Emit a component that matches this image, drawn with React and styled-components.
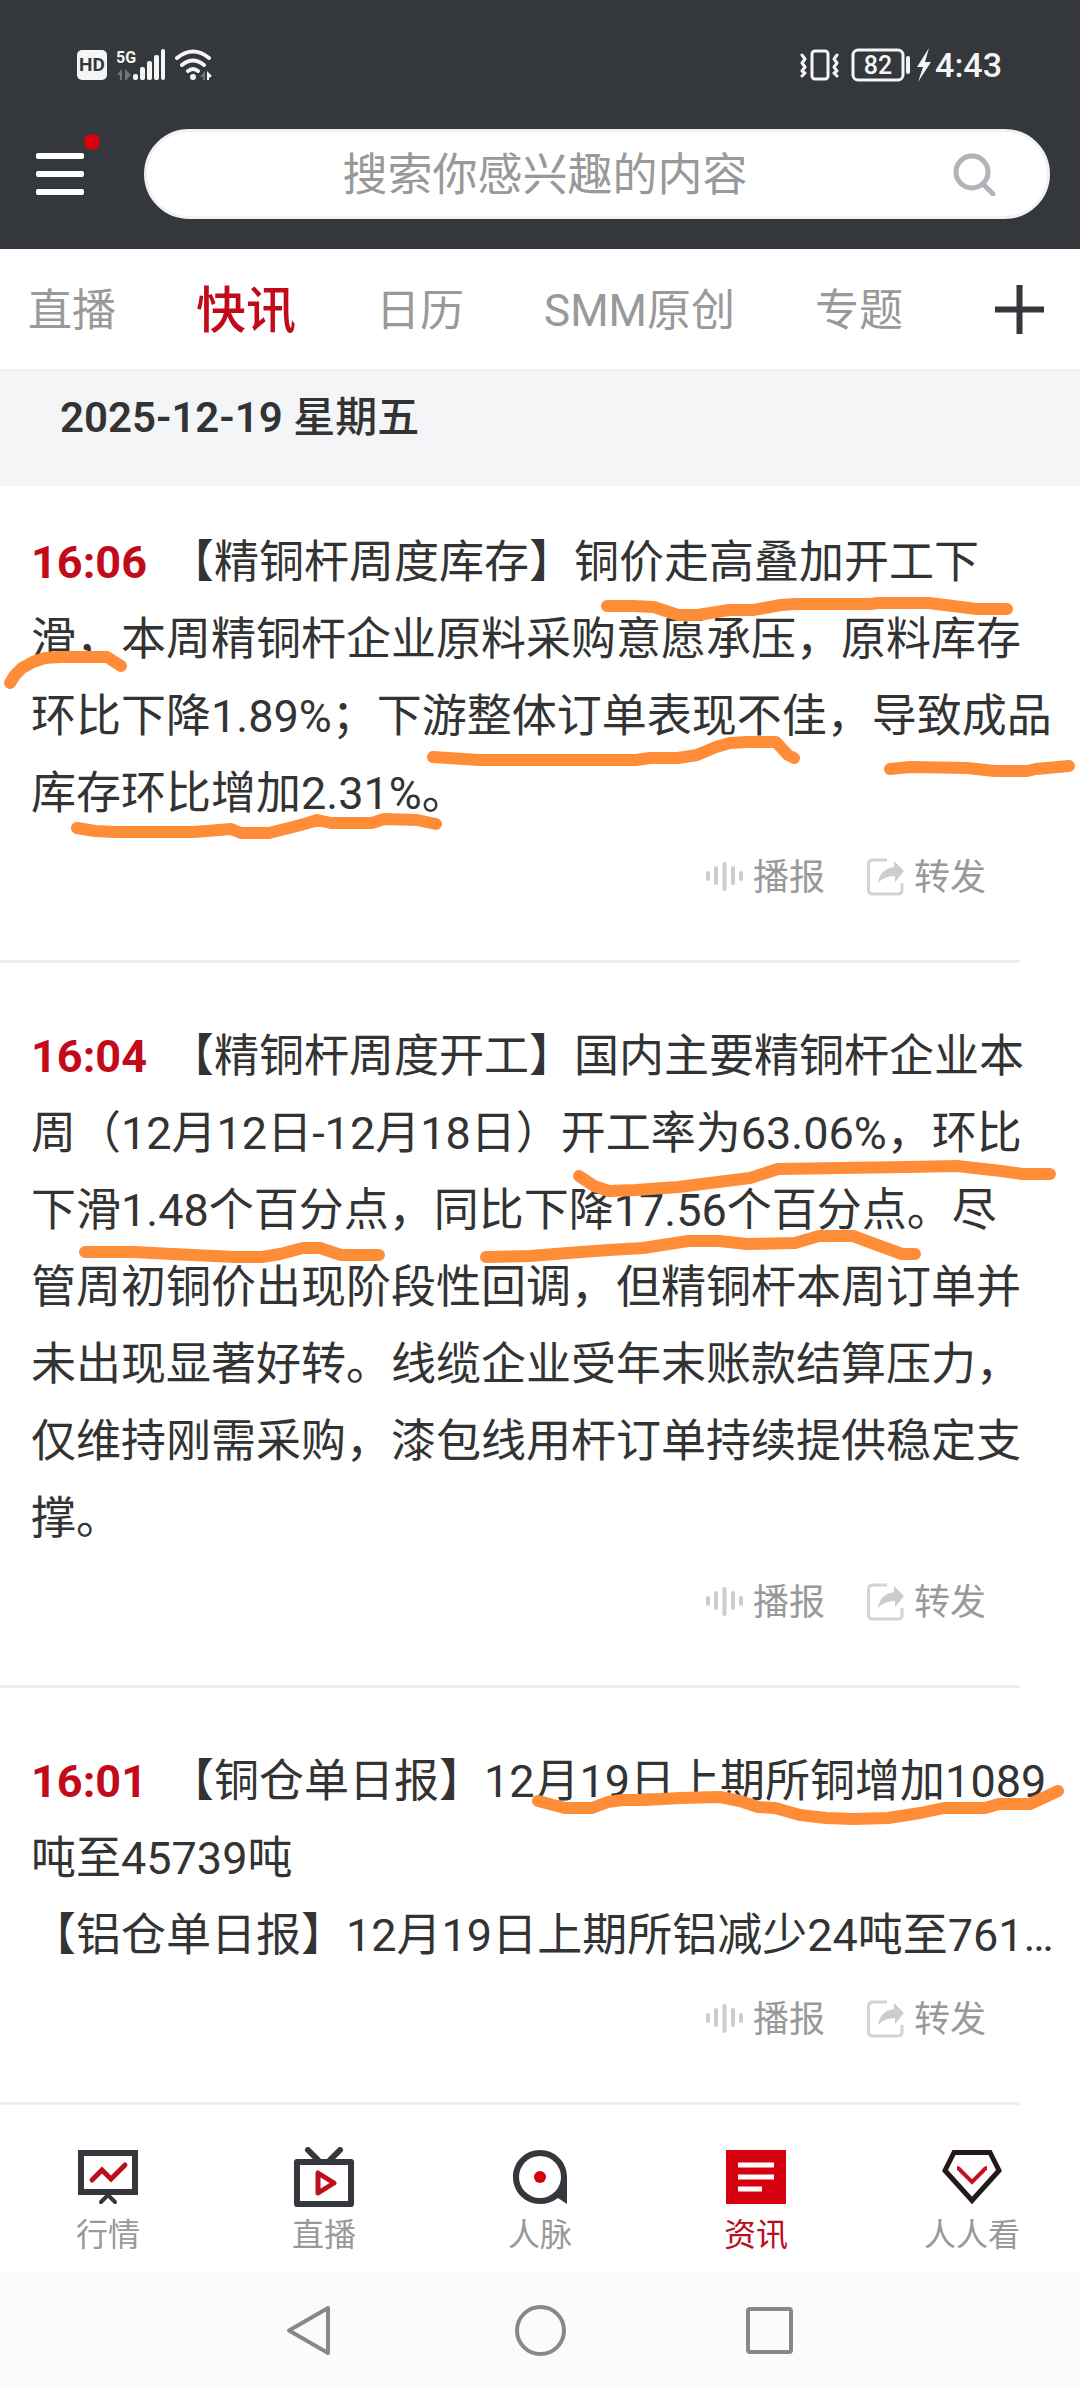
import React from "react";
import styled, { createGlobalStyle } from "styled-components";

const GlobalStyle = createGlobalStyle`
  * {
    box-sizing: border-box;
  }

  body {
    margin: 0;
    background: #fff;
    color: #333;
    font-family: Roboto, "Noto Sans CJK SC", sans-serif;
    text-spacing-trim: space-all;
  }

  svg {
    display: block;
    flex: none;
  }

  button {
    padding: 0;
    border: 0;
    background: none;
    color: inherit;
    font: inherit;
  }

  a {
    color: inherit;
    text-decoration: none;
  }
`;

const Header = styled.header`
  height: 249px;
  background: #34373c;
`;

const StatusBar = styled.div`
  height: 129px;
  padding: 0 78px 0 77px;
  display: flex;
  align-items: center;
  justify-content: space-between;
  color: #f5f5f5;
`;

const StatusGroup = styled.div`
  display: flex;
  align-items: center;
  gap: ${props => props.$gap}px;
`;

const HdBadge = styled.span`
  width: 30px;
  height: 30px;
  border-radius: 5px;
  background: #f5f5f5;
  color: #34373c;
  font-size: 19px;
  font-weight: 700;
  line-height: 30px;
  text-align: center;
`;

const Clock = styled.span`
  font-size: 34px;
  font-weight: 500;
  line-height: 40px;
`;

const SearchRow = styled.div`
  padding: 0 30px 0 36px;
  display: flex;
  align-items: center;
  gap: 60px;
`;

const MenuButton = styled.button`
  position: relative;
`;

const Dot = styled.span`
  position: absolute;
  top: -19px;
  right: -16px;
  width: 16px;
  height: 16px;
  border-radius: 50%;
  background: #d7000f;
`;

const SearchBox = styled.form`
  flex: 1;
  height: 90px;
  padding-right: 51px;
  display: flex;
  align-items: center;
  gap: 10px;
  border: 3px solid #f1f1f3;
  border-radius: 45px;
  background: #fff;
`;

const SearchInput = styled.input`
  flex: 1;
  min-width: 0;
  height: 100%;
  padding: 3px 0 0;
  border: 0;
  outline: 0;
  background: none;
  font-family: inherit;
  font-size: 45px;
  text-align: center;

  &::placeholder {
    color: #999;
    opacity: 1;
  }
`;

const Tabs = styled.nav`
  height: 123px;
  padding: 0 36px 0 28px;
  display: flex;
  align-items: center;
  gap: 80px;
  border-bottom: 3px solid #f1f1f1;
`;

const Tab = styled.a`
  padding-top: 4px;
  color: ${props => props.$active ? "#c10a1a" : "#999"};
  font-size: ${props => props.$active ? 50 : 44}px;
  font-weight: ${props => props.$active ? 500 : 400};
  line-height: 60px;
  white-space: nowrap;
`;

const AddButton = styled.button`
  margin-left: auto;
`;

const DateBar = styled.h2`
  height: 114px;
  margin: 0;
  padding: 16px 60px;
  background: #f4f5f7;
  font-size: 42px;
  font-weight: 600;
  line-height: 60px;
`;

const Weekday = styled.span`
  font-weight: 500;
`;

const Item = styled.article`
  position: relative;
  padding-top: ${props => props.$first ? 38 : 55}px;
`;

const ItemText = styled.p`
  margin: 0;
  padding: 0 20px 0 31px;
  font-size: 45px;
  line-height: 77px;
  white-space: pre-line;
`;

const Time = styled.time`
  margin-right: 22px;
  color: #c10a1a;
  font-weight: 700;
`;

const Actions = styled.div`
  height: 128px;
  padding: 20px 94px 0 0;
  display: flex;
  justify-content: flex-end;
  gap: 42px;
`;

const Action = styled.button`
  height: 52px;
  display: flex;
  align-items: center;
  gap: 10px;
  color: #999;
  font-size: 36px;
  line-height: 52px;
`;

const Divider = styled.hr`
  height: 3px;
  margin: 0 60px 0 0;
  border: 0;
  background: #eeeff1;
`;

const Marks = styled.svg`
  position: absolute;
  top: 0;
  left: 0;
  overflow: visible;
  pointer-events: none;
`;

const BottomNav = styled.nav`
  height: 167px;
  padding-top: 42px;
  display: grid;
  grid-template-columns: repeat(5, 1fr);
`;

const NavItem = styled.a`
  display: flex;
  flex-direction: column;
  align-items: center;
  gap: 4px;
  color: ${props => props.$active ? "#b80f1c" : "#999"};
  font-size: 32px;
  line-height: 48px;
`;

const SystemBar = styled.div`
  height: 116px;
  display: flex;
  align-items: center;
  justify-content: center;
  gap: 180px;
  background: #fbfbfb;
`;

const SignalIcon = () => (
  <svg width="48" height="32" viewBox="0 0 48 32" fill="#f5f5f5">
    <text x="-1" y="14" fontSize="16" fontWeight="700">5G</text>
    <path d="M0 26l5-6v11H3v-5zM8 20l6 6-4 4v1H8z" fill="#737578" />
    <rect x="16" y="25" width="5" height="6" rx="2" />
    <rect x="23" y="18" width="5" height="13" rx="2" />
    <rect x="30" y="12" width="5" height="19" rx="2" />
    <rect x="37" y="6" width="5" height="25" rx="2" />
    <rect x="44" y="0" width="4" height="31" rx="2" />
  </svg>
);

const WifiIcon = () => (
  <svg width="38" height="32" viewBox="0 0 38 32" fill="none" stroke="#f5f5f5" strokeWidth="4" strokeLinecap="round">
    <path d="M2 9q16-13 32 0M7 16q11-9 22 0M13 22q5-4 10 0" />
    <circle cx="18" cy="28" r="3" fill="#f5f5f5" stroke="none" />
    <path d="M25 28l5-6v9h-2v-3z" fill="#737578" stroke="none" />
    <path d="M32 22l5 5-3 2v2h-2z" fill="#f5f5f5" stroke="none" />
  </svg>
);

const VibrateIcon = () => (
  <svg width="39" height="32" viewBox="0 0 39 32" fill="none" stroke="#f5f5f5" strokeWidth="3" strokeLinecap="round" strokeLinejoin="round">
    <rect x="12" y="2" width="16" height="28" rx="3" />
    <path d="M2 6l3 4-3 4 3 4-3 4 3 2-3 3M37 6l-3 4 3 4-3 4 3 4-3 2 3 3" />
  </svg>
);

const BatteryIcon = () => (
  <svg width="80" height="34" viewBox="0 0 80 34" fill="none" stroke="#f5f5f5" strokeWidth="3">
    <rect x="2" y="2" width="50" height="30" rx="5" />
    <text x="27" y="26" fontSize="25" fontWeight="500" textAnchor="middle" fill="#f5f5f5" stroke="none">82</text>
    <path d="M57 10v14" strokeWidth="4" strokeLinecap="round" />
    <path d="M78 0L66 19h6l-5 15 13-20h-6z" fill="#f5f5f5" stroke="none" />
  </svg>
);

const MenuIcon = () => (
  <svg width="48" height="42" viewBox="0 0 48 42" fill="#fff">
    <rect width="48" height="6" rx="2" />
    <rect y="18" width="48" height="6" rx="2" />
    <rect y="36" width="48" height="6" rx="2" />
  </svg>
);

const SearchIcon = () => (
  <svg width="43" height="43" viewBox="0 0 43 43" fill="none" stroke="#b0b3b8" strokeWidth="5" strokeLinecap="round">
    <circle cx="19" cy="19" r="16" />
    <path d="M30 31l10 10" />
  </svg>
);

const PlusIcon = () => (
  <svg width="49" height="49" viewBox="0 0 49 49" stroke="#34373c" strokeWidth="6">
    <path d="M0 24.500h49M24.500 0v49" />
  </svg>
);

const WaveIcon = () => (
  <svg width="37" height="36" viewBox="0 0 37 36" stroke="#ccc" strokeWidth="4" strokeLinecap="round">
    <path d="M2 13v6M10 8v15M18.500 4v25M27 8v15M35 13v6" />
  </svg>
);

const ShareIcon = () => (
  <svg width="37" height="40" viewBox="0 0 37 40" fill="none">
    <path d="M20 2H6Q1.500 2 1.500 6v26q0 4 4.500 4h25q4 0 4-4v-7" stroke="#d4d4d4" strokeWidth="3" />
    <path d="M27 3l10 10-9 11v-6q-11 0-17 7 2-14 16-16z" fill="#ccc" />
  </svg>
);

const MarketIcon = () => (
  <svg width="60" height="60" viewBox="0 0 60 60" fill="none" stroke="#34373c" strokeWidth="6">
    <rect x="3" y="6" width="54" height="39" />
    <path d="M23 55l7-7 7 7" strokeWidth="4" strokeLinecap="round" />
    <path d="M14 33l10-10 9 9 14-14" stroke="#bd0f1c" strokeWidth="5" strokeLinecap="round" />
  </svg>
);

const LiveIcon = () => (
  <svg width="60" height="60" viewBox="0 0 60 60" fill="none" stroke="#34373c" strokeWidth="6" strokeLinejoin="round">
    <rect x="3" y="15" width="54" height="42" />
    <path d="M14 3l10 10M46 3L36 13" strokeLinecap="round" />
    <path d="M24 26v20l16-10z" stroke="#bd0f1c" strokeWidth="5" />
  </svg>
);

const PeopleIcon = () => (
  <svg width="60" height="60" viewBox="0 0 60 60" fill="none">
    <path d="M48 51Q40 57 30 57C15 57 3 45 3 30S15 3 30 3s27 12 27 27v27z" fill="#34373c" />
    <circle cx="30" cy="30" r="21" fill="#fff" />
    <circle cx="30" cy="30" r="6" fill="#d7000f" />
  </svg>
);

const NewsIcon = () => (
  <svg width="60" height="60" viewBox="0 0 60 60">
    <rect y="3" width="60" height="54" fill="#d7000f" />
    <path d="M12 18h36M12 30h36M12 42h24" stroke="#fff" strokeWidth="5" />
  </svg>
);

const DiamondIcon = () => (
  <svg width="60" height="60" viewBox="0 0 60 60" fill="none" stroke="#231a18" strokeWidth="5">
    <path d="M12 5.500h36l9 18-27 30-27-30z" />
    <path d="M15 21q2 0 4 3l11 11 11-11q2-3 4-3" stroke="#c7101e" strokeWidth="4" />
  </svg>
);

const tabs = ["直播", "快讯", "日历", "SMM原创", "专题"];

const navItems = [
  { label: "行情", icon: <MarketIcon /> },
  { label: "直播", icon: <LiveIcon /> },
  { label: "人脉", icon: <PeopleIcon /> },
  { label: "资讯", icon: <NewsIcon />, active: true },
  { label: "人人看", icon: <DiamondIcon /> }
];

// marks are marker strokes, in pixels from the top left of the item
const news = [
  {
    time: "16:06",
    text: "【精铜杆周度库存】铜价走高叠加开工下滑，本周精铜杆企业原料采购意愿承压，原料库存环比下降1.89%；下游整体订单表现不佳，导致成品库存环比增加2.31%。",
    marks: [
      "607,120 633,120 654,121 678,129 698,129 729,124 753,124 781,119 795,118 871,118 877,117 929,117 953,120 977,123 1007,123",
      "10,197 15,189 22,182 33,176 45,172 60,171 107,171 121,180",
      "433,271 448,272 479,274 636,274 650,272 678,272 697,269 716,261 730,257 747,256 776,256 788,269 794,272",
      "890,283 910,281 967,282 995,285 1027,285 1036,283 1069,280",
      "77,342 95,345 114,346 193,346 207,345 231,343 241,347 269,347 293,341 308,337 317,334 331,337 372,337 384,333 417,334 436,338"
    ]
  },
  {
    time: "16:04",
    text: "【精铜杆周度开工】国内主要精铜杆企业本周（12月12日-12月18日）开工率为63.06%，环比下滑1.48个百分点，同比下降17.56个百分点。尽\n管周初铜价出现阶段性回调，但精铜杆本周订单并未出现显著好转。线缆企业受年末账款结算压力，仅维持刚需采购，漆包线用杆订单持续提供稳定支撑。",
    marks: [
      "579,213 594,223 609,228 636,227 678,224 750,215 778,206 840,205 908,204 957,203 1001,208 1022,211 1050,211",
      "85,289 134,289 172,291 235,294 262,294 280,291 303,285 320,285 341,292 379,292",
      "486,294 530,293 568,290 609,287 643,285 688,278 719,278 747,281 795,280 819,273 853,273 880,283 902,291 915,291"
    ]
  },
  {
    time: "16:01",
    text: "【铜仓单日报】12月19日上期所铜增加1089吨至45739吨\n【铝仓单日报】12月19日上期所铝减少24吨至761…",
    marks: [
      "538,113 565,120 592,120 608,114 623,112 645,112 680,110 720,109 740,113 758,119 775,120 800,127 826,130 854,131 888,130 920,125 944,120 985,120 999,116 1030,116 1058,103"
    ]
  }
];

const NewsItem = ({ time, text, marks, first }) => (
  <Item $first={first}>
    <ItemText>
      <Time>{time}</Time>{text}
    </ItemText>
    <Actions>
      <Action type="button"><WaveIcon />播报</Action>
      <Action type="button"><ShareIcon />转发</Action>
    </Actions>
    <Divider />
    <Marks width="1080" height="400" fill="none" stroke="#ff8d38" strokeWidth="12" strokeLinecap="round" strokeLinejoin="round">
      {marks.map(points => <polyline key={points} points={points} />)}
    </Marks>
  </Item>
);

const App = () => (
  <>
    <GlobalStyle />
    <Header>
      <StatusBar>
        <StatusGroup $gap={10}>
          <HdBadge>HD</HdBadge>
          <SignalIcon />
          <WifiIcon />
        </StatusGroup>
        <StatusGroup $gap={4}>
          <StatusGroup $gap={12}>
            <VibrateIcon />
            <BatteryIcon />
          </StatusGroup>
          <Clock>4:43</Clock>
        </StatusGroup>
      </StatusBar>
      <SearchRow>
        <MenuButton type="button" aria-label="菜单">
          <MenuIcon />
          <Dot />
        </MenuButton>
        <SearchBox>
          <SearchInput type="text" placeholder="搜索你感兴趣的内容" aria-label="搜索" />
          <button type="button" aria-label="搜索"><SearchIcon /></button>
        </SearchBox>
      </SearchRow>
    </Header>

    <Tabs>
      {tabs.map(tab => <Tab key={tab} href="#" $active={tab === "快讯"}>{tab}</Tab>)}
      <AddButton type="button" aria-label="添加"><PlusIcon /></AddButton>
    </Tabs>

    <main>
      <DateBar>2025-12-19 <Weekday>星期五</Weekday></DateBar>
      {news.map((item, i) => <NewsItem key={item.time} {...item} first={i === 0} />)}
    </main>

    <BottomNav>
      {navItems.map(item => (
        <NavItem key={item.label} href="#" $active={item.active}>
          {item.icon}
          {item.label}
        </NavItem>
      ))}
    </BottomNav>

    <SystemBar>
      <button type="button" aria-label="返回">
        <svg width="51" height="51" viewBox="0 0 51 51" fill="none" stroke="#888" strokeWidth="4" strokeLinejoin="round">
          <path d="M44 3v45L5 25.500z" />
        </svg>
      </button>
      <button type="button" aria-label="主页">
        <svg width="51" height="51" viewBox="0 0 51 51" fill="none" stroke="#888" strokeWidth="4">
          <circle cx="25.500" cy="25.500" r="23.500" />
        </svg>
      </button>
      <button type="button" aria-label="最近任务">
        <svg width="51" height="51" viewBox="0 0 51 51" fill="none" stroke="#888" strokeWidth="4">
          <rect x="2" y="4" width="43" height="43" rx="2" />
        </svg>
      </button>
    </SystemBar>
  </>
);

export default App;
